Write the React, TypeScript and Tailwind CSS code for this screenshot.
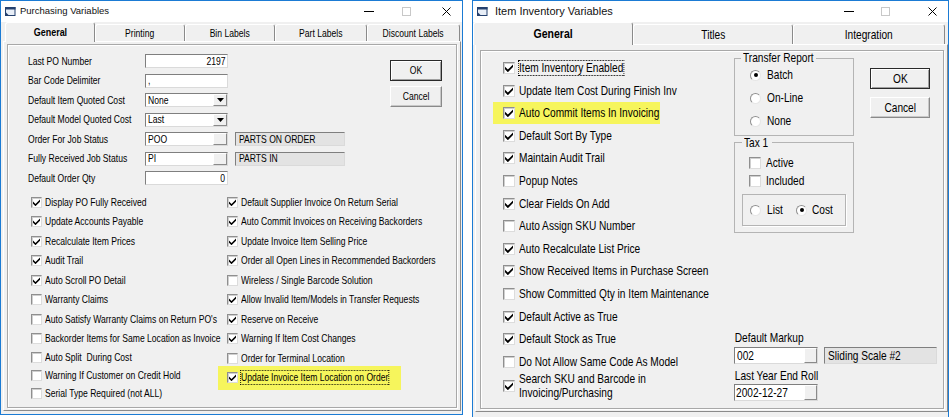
import clsx from "clsx";
import type { ReactNode } from "react";

// no narrow face installed, so the MS Sans Serif look comes from a horizontal squeeze
const SANS = "font-['Liberation_Sans',Arial,sans-serif]";
const SUNKEN = "border border-[#7f7f7f] border-r-[#dadada] border-b-[#dadada]";
const RAISED = "border border-white border-r-[#8a8a8a] border-b-[#8a8a8a]";

function T({ children, o = "l", className }: { children: ReactNode; o?: "l" | "c" | "r"; className?: string }) {
	return (
		<span
			className={clsx(
				"inline-block whitespace-pre scale-x-[0.78]",
				o === "l" && "origin-left",
				o === "c" && "origin-center",
				o === "r" && "origin-right",
				className,
			)}
		>
			{children}
		</span>
	);
}

function CheckMark({ size }: { size: number }) {
	return (
		<svg width={size} height={size} viewBox="0 0 7 7" className="block">
			<path d="M0 2.4 L2.5 4.9 L7 0.4 L7 2.7 L2.5 7.2 L0 4.7 Z" fill="#000" />
		</svg>
	);
}

function Box({ on, big }: { on?: boolean; big?: boolean }) {
	return (
		<span
			className={clsx(
				"flex shrink-0 items-center justify-center bg-white border border-[#8f8f8f] border-r-[#dcdcdc] border-b-[#dcdcdc] shadow-[inset_1px_1px_0_#cfcfcf]",
				big ? "size-[12px]" : "size-[11px]",
			)}
		>
			{on && <CheckMark size={big ? 8 : 7} />}
		</span>
	);
}

function Radio({ on }: { on?: boolean }) {
	return (
		<span className="flex size-[11px] shrink-0 items-center justify-center rounded-full border border-[#8f8f8f] border-r-[#e6e6e6] border-b-[#e6e6e6] bg-white">
			{on && <span className="size-[4px] rounded-full bg-black" />}
		</span>
	);
}

function Check({
	label,
	on,
	big,
	focus,
	className,
}: {
	label: ReactNode;
	on?: boolean;
	big?: boolean;
	focus?: boolean;
	className?: string;
}) {
	return (
		<div className={clsx("flex items-center gap-[3px]", className)}>
			<Box on={on} big={big} />
			<T className={clsx(focus && "outline-1 outline-dotted outline-black")}>{label}</T>
		</div>
	);
}

function Caption({ title, titleClass, gaps }: { title: string; titleClass: string; gaps: [string, string] }) {
	return (
		<div className="flex h-[21px] shrink-0 items-center bg-white">
			<svg width="12" height="11" viewBox="0 0 12 11" className="ml-[3px] shrink-0">
				<rect x="1.5" y="1.5" width="9.5" height="8" fill="#e8eef7" stroke="#24406e" />
				<rect x="1" y="1" width="10.5" height="2.5" fill="#24406e" />
				<path d="M1 5.5 L5 9.5 L1 9.5 Z" fill="#24406e" />
			</svg>
			<span className={clsx(SANS, "text-[#111]", titleClass)}>{title}</span>
			<div className="ml-auto flex items-center pr-[11px]">
				<span className="h-px w-[10px] bg-black" />
				<span className={clsx("size-[9px] border border-[#c8c8c8]", gaps[0])} />
				<svg width="9" height="9" viewBox="0 0 9 9" className={gaps[1]}>
					<path d="M0.5 0.5 L8.5 8.5 M8.5 0.5 L0.5 8.5" stroke="#000" strokeWidth="1" />
				</svg>
			</div>
		</div>
	);
}

function Tab({ label, active, className }: { label: string; active?: boolean; className?: string }) {
	return (
		<div
			className={clsx(
				"flex shrink-0 items-center justify-center rounded-t-[3px] border-t border-l border-r border-t-white border-l-white border-r-[#8a8a8a] bg-[#f0f0f0]",
				active && "relative z-10 -mb-px font-bold",
				className,
			)}
		>
			<T o="c">{label}</T>
		</div>
	);
}

function Btn({ label, def, className }: { label: string; def?: boolean; className?: string }) {
	return (
		<div
			className={clsx(
				"flex items-center justify-center bg-[#f0f0f0]",
				def
					? "border border-[#2a2a2a] shadow-[inset_1px_1px_0_#fff,inset_-1px_-1px_0_#a0a0a0]"
					: clsx(RAISED, "shadow-[inset_-1px_-1px_0_#c8c8c8]"),
				className,
			)}
		>
			<T o="c">{label}</T>
		</div>
	);
}

function DropArrow() {
	return (
		<span className={clsx("flex w-[14px] shrink-0 items-center justify-center bg-[#f0f0f0]", RAISED)}>
			<svg width="7" height="4" viewBox="0 0 7 4">
				<path d="M0 0 H7 L3.5 4 Z" fill="#000" />
			</svg>
		</span>
	);
}

function FormRow({ label, children }: { label: string; children: ReactNode }) {
	return (
		<div className="flex h-[14px] items-center">
			<span className="w-[117px] shrink-0">
				<T>{label}</T>
			</span>
			{children}
		</div>
	);
}

function Lookup({ value, desc }: { value: string; desc: string }) {
	return (
		<>
			<div className={clsx("flex h-full w-[83px] bg-white", SUNKEN)}>
				<span className="flex flex-1 items-center pl-[2px]">
					<T>{value}</T>
				</span>
				<span className={clsx("w-[14px] shrink-0 bg-[#f0f0f0]", RAISED)} />
			</div>
			<div className={clsx("ml-[7px] flex h-full w-[110px] items-center bg-[#e3e3e3] pl-[3px]", SUNKEN)}>
				<T>{desc}</T>
			</div>
		</>
	);
}

function Select({ value }: { value: string }) {
	return (
		<div className={clsx("flex h-full w-[83px] bg-white", SUNKEN)}>
			<span className="flex flex-1 items-center pl-[2px]">
				<T>{value}</T>
			</span>
			<DropArrow />
		</div>
	);
}

const leftCol1: [string, boolean][] = [
	["Display PO Fully Received", true],
	["Update Accounts Payable", true],
	["Recalculate Item Prices", true],
	["Audit Trail", true],
	["Auto Scroll PO Detail", true],
	["Warranty Claims", false],
	["Auto Satisfy Warranty Claims on Return PO's", false],
	["Backorder Items for Same Location as Invoice", false],
	["Auto Split  During Cost", false],
	["Warning If Customer on Credit Hold", false],
	["Serial Type Required (not ALL)", false],
];

const leftCol2: [string, boolean][] = [
	["Default Supplier Invoice On Return Serial", true],
	["Auto Commit Invoices on Receiving Backorders", true],
	["Update Invoice Item Selling Price", true],
	["Order all Open Lines in Recommended Backorders", true],
	["Wireless / Single Barcode Solution", false],
	["Allow Invalid Item/Models in Transfer Requests", true],
	["Reserve on Receive", true],
	["Warning If Item Cost Changes", true],
	["Order for Terminal Location", false],
];

function PurchasingWindow() {
	return (
		<div className="flex h-[415px] w-[463px] shrink-0 flex-col border border-[#1b7bd4] bg-[#f0f0f0]">
			<Caption title="Purchasing Variables" titleClass="ml-[4px] text-[9.5px]" gaps={["ml-[28px]", "ml-[31px]"]} />
			<div className={clsx("flex h-[19px] shrink-0 items-end pl-[4px] text-[11px]", SANS)}>
				<Tab label="General" active className="h-[20px] w-[90px] text-[11.5px]" />
				<Tab label="Printing" className="h-[17px] w-[90px]" />
				<Tab label="Bin Labels" className="h-[17px] w-[90px]" />
				<Tab label="Part Labels" className="h-[17px] w-[92px]" />
				<Tab label="Discount Labels" className="h-[17px] w-[93px]" />
			</div>
			<div
				className={clsx(
					"mb-[3px] ml-[2px] mr-[1px] flex flex-1 flex-col border border-white border-r-[#8a8a8a] border-b-[#8a8a8a] px-[3px] pt-[2px] pb-[2px] text-[11px] leading-[13px] text-black",
					SANS,
				)}
			>
				<div className="flex flex-1 flex-col border border-[#a8a8a8] shadow-[inset_1px_1px_0_#fff,1px_1px_0_#fff] pt-[9px] pl-[20px] pr-[14px]">
					<div className="flex">
						<div className="flex flex-col gap-[5.5px]">
							<FormRow label="Last PO Number">
								<div className={clsx("flex h-full w-[83px] items-center justify-end bg-white pr-[2px]", SUNKEN)}>
									<T o="r">2197</T>
								</div>
							</FormRow>
							<FormRow label="Bar Code Delimiter">
								<div className={clsx("flex h-full w-[83px] items-center bg-white pl-[2px]", SUNKEN)}>
									<T>,</T>
								</div>
							</FormRow>
							<FormRow label="Default Item Quoted Cost">
								<Select value="None" />
							</FormRow>
							<FormRow label="Default Model Quoted Cost">
								<Select value="Last" />
							</FormRow>
							<FormRow label="Order For Job Status">
								<Lookup value="POO" desc="PARTS ON ORDER" />
							</FormRow>
							<FormRow label="Fully Received Job Status">
								<Lookup value="PI" desc="PARTS IN" />
							</FormRow>
							<FormRow label="Default Order Qty">
								<div className={clsx("flex h-full w-[83px] items-center justify-end bg-white pr-[2px]", SUNKEN)}>
									<T o="r">0</T>
								</div>
							</FormRow>
						</div>
						<div className="ml-auto mt-[6px] flex flex-col gap-[5px]">
							<Btn label="OK" def className="h-[21px] w-[52px]" />
							<Btn label="Cancel" className="h-[21px] w-[52px]" />
						</div>
					</div>

					<div className="ml-[3px] mt-[7.25px] flex">
						<div className="flex w-[196px] flex-col">
							{leftCol1.map(([label, on], i) => (
								<Check key={label} label={label} on={on} className={i < 8 ? "h-[19.5px]" : "h-[18px]"} />
							))}
						</div>
						<div className="flex flex-col">
							{leftCol2.map(([label, on]) => (
								<Check key={label} label={label} on={on} className="h-[19.5px]" />
							))}
							<Check
								label="Update Invoice Item Location on Order"
								on
								focus
								className="-my-[2.25px] -ml-[9px] h-[24px] w-[183px] bg-[#f6f55c] pl-[9px]"
							/>
						</div>
					</div>
				</div>
			</div>
		</div>
	);
}

const rightChecks: [string, boolean][] = [
	["Item Inventory Enabled", true],
	["Update Item Cost During Finish Inv", true],
	["Auto Commit Items In Invoicing", true],
	["Default Sort By Type", true],
	["Maintain Audit Trail", true],
	["Popup Notes", false],
	["Clear Fields On Add", true],
	["Auto Assign SKU Number", false],
	["Auto Recalculate List Price", true],
	["Show Received Items in Purchase Screen", true],
	["Show Committed Qty in Item Maintenance", false],
	["Default Active as True", true],
	["Default Stock as True", true],
	["Do Not Allow Same Code As Model", false],
];

function InventoryWindow() {
	return (
		<div className="ml-[9px] flex h-[417px] w-[477px] shrink-0 flex-col border-t border-l border-r border-[#1b7bd4] bg-[#f0f0f0]">
			<Caption title="Item Inventory Variables" titleClass="ml-[7px] text-[11px]" gaps={["ml-[27px]", "ml-[38px]"]} />
			<div className={clsx("flex h-[22px] shrink-0 items-end text-[13px]", SANS)}>
				<Tab label="General" active className="h-[23px] w-[160px] text-[13.5px]" />
				<Tab label="Titles" className="h-[20px] w-[160px]" />
				<Tab label="Integration" className="h-[20px] w-[152px]" />
			</div>
			<div
				className={clsx(
					"mb-[5px] ml-[2px] flex flex-1 flex-col border border-white border-r-[#8a8a8a] border-b-[#8a8a8a] pt-[5px] pl-[4px] pr-[3px] pb-[2px] text-[13px] leading-[14px] text-black",
					SANS,
				)}
			>
				<div className="flex flex-1 border border-[#a8a8a8] shadow-[inset_1px_1px_0_#fff,1px_1px_0_#fff] pl-[22px]">
					<div className="flex w-[231px] flex-col pt-[5.7px]">
						{rightChecks.map(([label, on], i) => (
							<Check
								key={label}
								label={label}
								on={on}
								big
								focus={i === 0}
								className={clsx("h-[22.6px] gap-[4px]", i === 2 && "-ml-[10px] w-[167px] bg-[#f6f55c] pl-[10px]")}
							/>
						))}
						<Check
							big
							on
							className="h-[26px] gap-[4px]"
							label={
								<>
									Search SKU and Barcode in
									<br />
									Invoicing/Purchasing
								</>
							}
						/>
					</div>

					<div className="flex flex-col">
						<div className="flex">
							<div className="flex w-[120px] flex-col">
								<fieldset className="border border-[#b4b4b4] pb-[2px]">
									<legend className="ml-[6px] w-[75px] px-[2px] leading-[14px]">
										<T>Transfer Report</T>
									</legend>
									<div className="-mt-[1.5px] flex flex-col pl-[15px]">
										{(
											[
												["Batch", true],
												["On-Line", false],
												["None", false],
											] as [string, boolean][]
										).map(([label, on]) => (
											<div key={label} className="flex h-[23px] items-center gap-[6px]">
												<Radio on={on} />
												<T>{label}</T>
											</div>
										))}
									</div>
								</fieldset>
								<fieldset className="border border-[#b4b4b4] pb-[6px]">
									<legend className="ml-[7px] w-[30px] px-[2px] leading-[14px]">
										<T>Tax 1</T>
									</legend>
									<div className="mt-[4.5px] flex flex-col pl-[14px]">
										<Check label="Active" big className="h-[18px] gap-[5px]" />
										<Check label="Included" big className="h-[18px] gap-[5px]" />
									</div>
									<div className="mx-[7px] mt-[4px] flex h-[32px] items-center border border-[#b4b4b4] shadow-[1px_1px_0_#fff] pl-[7px]">
										<Radio />
										<T className="ml-[6px] w-[16px]">List</T>
										<span className="ml-[13px]">
											<Radio on />
										</span>
										<T className="ml-[5px]">Cost</T>
									</div>
								</fieldset>
							</div>
							<div className="ml-[16px] mt-[17px] flex flex-col gap-[8px]">
								<Btn label="OK" def className="h-[21px] w-[60px]" />
								<Btn label="Cancel" className="h-[21px] w-[60px]" />
							</div>
						</div>

						<div className="mt-[98px] flex flex-col">
							<T className="pl-[1px]">Default Markup</T>
							<div className="mt-[2px] flex h-[17px]">
								<div className={clsx("flex w-[84px] bg-white", SUNKEN)}>
									<span className="flex flex-1 items-center pl-[2px]">
										<T>002</T>
									</span>
									<span className={clsx("w-[13px] shrink-0 bg-[#f0f0f0]", RAISED)} />
								</div>
								<div className={clsx("ml-[6px] flex w-[113px] items-center bg-[#e3e3e3] pl-[3px]", SUNKEN)}>
									<T>Sliding Scale #2</T>
								</div>
							</div>
							<T className="mt-[5px] pl-[1px]">Last Year End Roll</T>
							<div className="mt-px flex h-[17px]">
								<div className={clsx("flex w-[84px] bg-white", SUNKEN)}>
									<span className="flex flex-1 items-center pl-[1px]">
										<T>2002-12-27</T>
									</span>
									<span className={clsx("w-[13px] shrink-0 bg-[#f0f0f0]", RAISED)} />
								</div>
							</div>
						</div>
					</div>
				</div>
			</div>
		</div>
	);
}

export default function App() {
	return (
		<div className="flex h-[417px] w-[949px] overflow-hidden bg-white">
			<PurchasingWindow />
			<InventoryWindow />
		</div>
	);
}
